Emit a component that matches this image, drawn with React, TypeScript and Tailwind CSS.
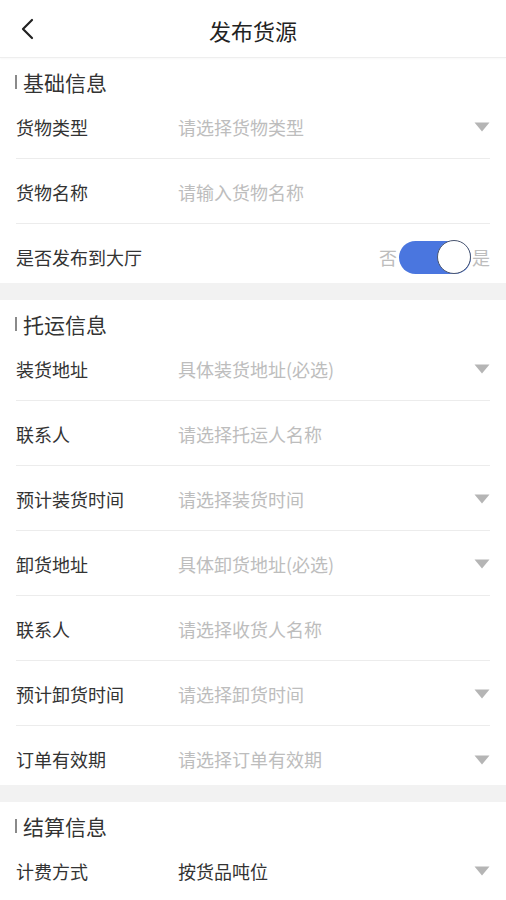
import React from 'react';

type Row = { label: string; value: string; filled?: boolean; arrow?: boolean };

const basic: Row[] = [
  { label: '货物类型', value: '请选择货物类型', arrow: true },
  { label: '货物名称', value: '请输入货物名称' },
];

const shipping: Row[] = [
  { label: '装货地址', value: '具体装货地址(必选)', arrow: true },
  { label: '联系人', value: '请选择托运人名称' },
  { label: '预计装货时间', value: '请选择装货时间', arrow: true },
  { label: '卸货地址', value: '具体卸货地址(必选)', arrow: true },
  { label: '联系人', value: '请选择收货人名称' },
  { label: '预计卸货时间', value: '请选择卸货时间', arrow: true },
  { label: '订单有效期', value: '请选择订单有效期', arrow: true },
];

const settle: Row[] = [{ label: '计费方式', value: '按货品吨位', filled: true, arrow: true }];

const Arrow = () => (
  <svg width="16" height="10" viewBox="0 0 16 10" className="shrink-0">
    <path d="M0.5 0.5 L15.5 0.5 L8 9.5 Z" fill="#b5b5b5" />
  </svg>
);

const SectionTitle = ({ title }: { title: string }) => (
  <div className="h-[36px] flex items-end pb-[1px] pl-[15px]">
    <div className="flex items-center h-[22px]">
      <span className="w-[2px] h-[14px] bg-[#8a8a8a] mr-[6px]" />
      <span className="text-[21px] leading-[22px] text-[#333]">{title}</span>
    </div>
  </div>
);

const FormRow = ({ row, last }: { row: Row; last?: boolean }) => (
  <div
    className={`mx-[16px] flex items-center ${last ? 'h-[59px]' : 'h-[65px] border-b border-[#ececec]'}`}
  >
    <div className={`flex items-center w-full ${last ? 'pt-[8px]' : 'pt-[2px]'}`}>
      <span className="w-[162px] text-[18px] text-[#333] shrink-0">{row.label}</span>
      <span className={`flex-1 text-[18px] ${row.filled ? 'text-[#333]' : 'text-[#bdbdbd]'}`}>
        {row.value}
      </span>
      {row.arrow && <Arrow />}
    </div>
  </div>
);

const Gap = () => <div className="h-[17px] bg-[#f2f2f2]" />;

export default function App() {
  return (
    <div
      className="w-[506px] h-[900px] overflow-hidden bg-white"
      style={{ fontFamily: '"Noto Sans CJK SC", "Noto Sans", sans-serif' }}
    >
      {/* Header */}
      <div className="h-[58px] relative flex items-center justify-center border-b border-[#eeeeee] shadow-[0_1px_2px_rgba(0,0,0,0.03)]">
        <svg width="16" height="22" viewBox="0 0 16 22" className="absolute left-[19px] top-[18px]">
          <path d="M13 2 L4 11 L13 20" fill="none" stroke="#222" strokeWidth="2.2" strokeLinecap="round" strokeLinejoin="round" />
        </svg>
        <span className="text-[22px] text-[#222] pt-[3px]">发布货源</span>
      </div>

      <SectionTitle title="基础信息" />
      {basic.map((r, i) => (
        <FormRow key={i} row={r} />
      ))}
      <div className="mx-[16px] h-[59px] flex items-center pt-[7px]">
        <span className="flex-1 text-[18px] text-[#333]">是否发布到大厅</span>
        <span className="text-[18px] text-[#bdbdbd] mr-[2px]">否</span>
        <div className="w-[72px] h-[33px] rounded-full bg-[#4a76df] flex items-center justify-end">
          <div className="w-[34px] h-[34px] rounded-full bg-white border border-[#4a5670]" />
        </div>
        <span className="text-[18px] text-[#bdbdbd] ml-[1px]">是</span>
      </div>
      <Gap />

      <SectionTitle title="托运信息" />
      {shipping.map((r, i) => (
        <FormRow key={i} row={r} last={i === shipping.length - 1} />
      ))}
      <Gap />

      <SectionTitle title="结算信息" />
      {settle.map((r, i) => (
        <FormRow key={i} row={r} />
      ))}
    </div>
  );
}
